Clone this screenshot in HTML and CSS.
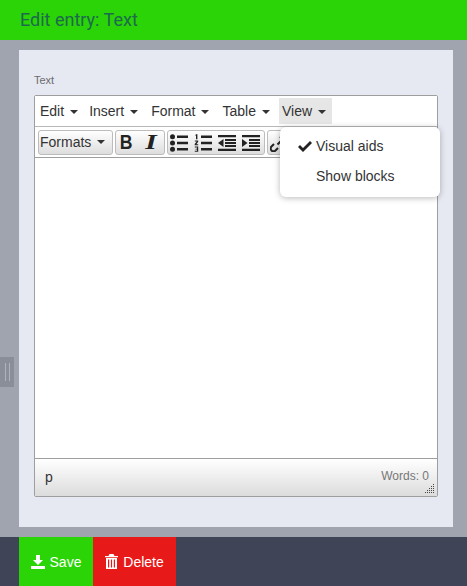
FILE: index.html
```html
<!DOCTYPE html>
<html lang="en">
<head>
<meta charset="utf-8">
<title>Edit entry: Text</title>
<link rel="stylesheet" href="styles.css">
</head>
<body>
<div class="app">
  <header class="topbar"><h1 class="title">Edit entry: Text</h1></header>
  <main class="main">
    <div class="handle"><span class="grip"></span><span class="grip"></span></div>
    <section class="panel">
      <label class="field-label">Text</label>
      <div class="editor">
        <nav class="menubar">
          <span class="menu-item tight">Edit<i class="caret"></i></span>
          <span class="menu-item">Insert<i class="caret"></i></span>
          <span class="menu-item">Format<i class="caret"></i></span>
          <span class="menu-item tighter">Table<i class="caret"></i></span>
          <span class="menu-item active">View<i class="caret"></i></span>
        </nav>
        <div class="toolbar">
          <div class="group"><span class="tbtn formats">Formats<i class="caret"></i></span></div>
          <div class="group">
            <span class="tbtn icon-btn"><span class="bold">B</span></span>
            <span class="tbtn icon-btn"><span class="italic">I</span></span>
          </div>
          <div class="group">
            <span class="tbtn icon-btn"><svg class="ico" viewBox="0 0 18 18"><circle cx="2.500" cy="2.800" r="2.500"/><circle cx="2.500" cy="9" r="2.500"/><circle cx="2.500" cy="15.200" r="2.500"/><path d="M7 1.500h11v2.500H7zM7 7.800h11v2.500H7zM7 14h11v2.500H7z"/></svg></span>
            <span class="tbtn icon-btn"><svg class="ico" viewBox="0 0 18 18"><path d="M2 .3h1.400v5H2V1.600H1zM.8 6.500h3.400v1.300L2.400 10.200h1.800v1.100H.7v-1.200l2-2.500H.8zM.8 12.500h3.400v5.200H.8v-1h2.200v-1.100H1.500v-.9H3v-1.100H.8zM7 1.500h11v2.500H7zM7 7.800h11v2.500H7zM7 14h11v2.500H7z"/></svg></span>
            <span class="tbtn icon-btn"><svg class="ico" viewBox="0 0 18 18"><path d="M0 1h18v2.200H0zM7 5h11v2H7zM7 8h11v2H7zM7 11h11v2H7zM0 14.800h18V17H0zM5.500 5v8L0 9z"/></svg></span>
            <span class="tbtn icon-btn"><svg class="ico" viewBox="0 0 18 18"><path d="M0 1h18v2.200H0zM7 5h11v2H7zM7 8h11v2H7zM7 11h11v2H7zM0 14.800h18V17H0zM0 5v8l5.500-4z"/></svg></span>
          </div>
          <div class="group">
            <span class="tbtn icon-btn"><svg class="ico" viewBox="0 0 18 18"><path d="M7.500 10.500 11 7" stroke="#222" stroke-width="2"/><path d="M4 10 1.500 12.500a2.800 2.800 0 0 0 4 4L8 14M10 4l2.500-2.500a2.800 2.800 0 0 1 4 4L14 8" fill="none" stroke="#222" stroke-width="2"/></svg></span>
          </div>
        </div>
        <div class="content"></div>
        <footer class="statusbar">
          <span class="path">p</span>
          <span class="words">Words: 0</span>
          <svg class="resize" viewBox="0 0 10 10"><path d="M8 0h1v1H8zM6 2h1v1H6zM8 2h1v1H8zM4 4h1v1H4zM6 4h1v1H6zM8 4h1v1H8zM2 6h1v1H2zM4 6h1v1H4zM6 6h1v1H6zM8 6h1v1H8zM0 8h1v1H0zM2 8h1v1H2zM4 8h1v1H4zM6 8h1v1H6zM8 8h1v1H8z" fill="#444"/></svg>
        </footer>
        <div class="dropdown">
          <div class="drop-item"><svg class="check" viewBox="0 0 14 11"><path d="M0 6l2-2 3 3 7-7 2 2-9 9z"/></svg>Visual aids</div>
          <div class="drop-item">Show blocks</div>
        </div>
      </div>
    </section>
  </main>
  <footer class="actions">
    <button class="btn save"><svg class="btn-ico" viewBox="0 0 14 14"><path d="M5 0h4v5h3L7 10 2 5h3zM0 11h14v3H0z"/></svg>Save</button>
    <button class="btn delete"><svg class="btn-ico trash" viewBox="0 0 13 15"><path d="M4.500 0h4l1 2H13v1.200H0V2h3.500zM1 4h11v11H1zM3 5.500v8h1.200v-8zM5.900 5.500v8h1.200v-8zM8.800 5.500v8H10v-8z" fill-rule="evenodd"/></svg>Delete</button>
  </footer>
</div>
</body>
</html>
```
FILE: styles.css
```css
* { box-sizing: border-box; }
html, body { margin: 0; height: 100%; }
body { font-family: "Liberation Sans", Arial, sans-serif; background: #a0a4ae; overflow: hidden; }
.app { width: 467px; height: 586px; display: flex; flex-direction: column; }
.topbar { height: 40px; background: #2bd406; padding: 0 0 2px 20px; display: flex; align-items: center; flex: none; }
.title { margin: 0; font: 400 18px "Roboto", sans-serif; color: #1d6a4e; }
.main { flex: 1; position: relative; padding: 10px 14px 10px 19px; min-height: 0; }
.handle { position: absolute; left: 0; top: 317px; width: 14px; height: 30px; background: #8a8e98; display: flex; gap: 3px; justify-content: center; align-items: center; }
.grip { width: 1px; height: 18px; background: #b0b3bb; }
.panel { height: 100%; background: #e6e9f2; padding: 24px 15px 30px; display: flex; flex-direction: column; }
.field-label { font-size: 11px; line-height: 12px; height: 21px; color: #6a6a70; }
.editor { position: relative; height: 402px; border: 1px solid #9e9e9e; border-radius: 2px; background: #fff; display: flex; flex-direction: column; flex: none; }
.menubar { height: 31px; background: #fff; border-bottom: 1px solid #b8b8b8; padding: 2px 0 0 2px; display: flex; flex: none; }
.menu-item { height: 26px; padding: 0 3px; margin-right: 7px; font-size: 14px; line-height: 26px; color: #333; }
.menu-item.tight { margin-right: 5px; }
.menu-item.tighter { margin-right: 6px; }
.menu-item.active { background: #e6e6e6; margin-right: 0; padding-right: 6px; }
.caret { display: inline-block; width: 0; height: 0; margin-left: 6px; vertical-align: middle; border: 4px solid transparent; border-top-color: #333; border-bottom: 0; }
.toolbar { height: 31px; padding: 3px 0 0 3px; display: flex; gap: 2px; background: #fff; border-bottom: 1px solid #9e9e9e; flex: none; overflow: hidden; }
.group { height: 25px; display: flex; border: 1px solid #bcbcbc; border-radius: 3px; background: linear-gradient(#fff, #ddd); }
.tbtn { height: 23px; padding-bottom: 2px; display: flex; align-items: center; justify-content: center; font-size: 14px; color: #333; }
.formats { width: 73px; padding-left: 1px; justify-content: flex-start; }
.icon-btn { width: 24px; padding-bottom: 0; }
.bold { font: 700 20px "Liberation Sans", sans-serif; color: #222; transform: scaleX(.88); margin-right: 3px; }
.italic { font: italic 700 21px "Liberation Serif", serif; color: #222; transform: scaleX(1.4); margin-right: 2px; }
.ico { width: 18px; height: 18px; fill: #222; margin-right: 2px; }
.content { flex: 1; background: #fff; }
.statusbar { position: relative; height: 38px; flex: none; border-top: 1px solid #9e9e9e; background: linear-gradient(#fff, #dcdcdc); display: flex; justify-content: space-between; align-items: center; padding: 0 8px 2px 10px; }
.path { font-size: 14px; color: #333; }
.words { font-size: 12px; color: #777; margin-bottom: 1px; }
.resize { position: absolute; right: 2px; bottom: 2px; width: 10px; height: 10px; }
.dropdown { position: absolute; left: 245px; top: 31px; width: 160px; height: 70px; padding: 4px 0; background: #fff; border-radius: 6px; box-shadow: 0 1px 6px rgba(0,0,0,.28); }
.drop-item { position: relative; height: 30px; padding-left: 36px; font-size: 14px; line-height: 30px; color: #333; }
.check { position: absolute; left: 18px; top: 10px; width: 14px; height: 11px; fill: #222; }
.actions { height: 49px; flex: none; background: #3f4557; padding-left: 19px; display: flex; }
.btn { height: 49px; border: 0; padding: 0; font: 14px "Liberation Sans", sans-serif; color: #fff; display: flex; align-items: center; justify-content: center; gap: 5px; }
.save { width: 74px; background: #2bd406; }
.delete { width: 83px; background: #e81919; }
.btn-ico { width: 14px; height: 14px; fill: #fff; }
.trash { height: 15px; width: 13px; }
```
